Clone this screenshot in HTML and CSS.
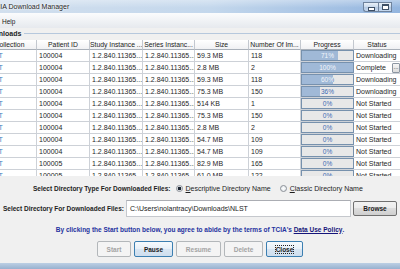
FILE: index.html
```html
<!DOCTYPE html>
<html lang="en">

<head>
    <meta charset="UTF-8">
    <meta name="viewport" content="width=device-width, initial-scale=1.0">
    <title>TCIA Download Manager</title>
    <link rel="stylesheet" href="styles.css">
</head>

<body>
    <div class="window">
        <div class="titlebar">
            <span class="title">TCIA Download Manager</span>
            <div class="caption-buttons">
                <span class="cap-btn"><span class="cap-min"></span></span>
                <span class="cap-btn"><span class="cap-max"></span></span>
            </div>
        </div>
        <div class="menubar"><span class="menu-item">Help</span></div>

        <div class="content">
            <div class="group-title"><span>Downloads</span><span class="group-line"></span></div>

            <div class="table-scroll">
                <table class="downloads">
                    <colgroup>
                        <col class="c-collection">
                        <col class="c-patient">
                        <col class="c-study">
                        <col class="c-series">
                        <col class="c-size">
                        <col class="c-count">
                        <col class="c-progress">
                        <col class="c-status">
                    </colgroup>
                    <thead>
                        <tr>
                            <th>Collection</th>
                            <th>Patient ID</th>
                            <th>Study Instance ...</th>
                            <th>Series Instanc...</th>
                            <th>Size</th>
                            <th>Number Of Im...</th>
                            <th>Progress</th>
                            <th>Status</th>
                        </tr>
                    </thead>
                    <tbody>
                        <tr>
                            <td class="coll">NLST</td><td>100004</td><td>1.2.840.11365...</td><td>1.2.840.11365...</td>
                            <td>59.3 MB</td><td>118</td>
                            <td class="prog"><div class="bar"><span class="bar-label">71%</span><div class="bar-fill" style="width: 71%"><span class="bar-label">71%</span></div></div></td>
                            <td>Downloading</td>
                        </tr>
                        <tr>
                            <td class="coll">NLST</td><td>100004</td><td>1.2.840.11365...</td><td>1.2.840.11365...</td>
                            <td>2.8 MB</td><td>2</td>
                            <td class="prog"><div class="bar"><span class="bar-label">100%</span><div class="bar-fill" style="width: 100%"><span class="bar-label">100%</span></div></div></td>
                            <td><div class="status-cell"><span>Complete</span><span class="more-btn">...</span></div></td>
                        </tr>
                        <tr>
                            <td class="coll">NLST</td><td>100004</td><td>1.2.840.11365...</td><td>1.2.840.11365...</td>
                            <td>59.3 MB</td><td>118</td>
                            <td class="prog"><div class="bar"><span class="bar-label">60%</span><div class="bar-fill" style="width: 60%"><span class="bar-label">60%</span></div></div></td>
                            <td>Downloading</td>
                        </tr>
                        <tr>
                            <td class="coll">NLST</td><td>100004</td><td>1.2.840.11365...</td><td>1.2.840.11365...</td>
                            <td>75.3 MB</td><td>150</td>
                            <td class="prog"><div class="bar"><span class="bar-label">36%</span><div class="bar-fill" style="width: 36%"><span class="bar-label">36%</span></div></div></td>
                            <td>Downloading</td>
                        </tr>
                        <tr>
                            <td class="coll">NLST</td><td>100004</td><td>1.2.840.11365...</td><td>1.2.840.11365...</td>
                            <td>514 KB</td><td>1</td>
                            <td class="prog"><div class="bar"><span class="bar-label">0%</span></div></td>
                            <td>Not Started</td>
                        </tr>
                        <tr>
                            <td class="coll">NLST</td><td>100004</td><td>1.2.840.11365...</td><td>1.2.840.11365...</td>
                            <td>75.3 MB</td><td>150</td>
                            <td class="prog"><div class="bar"><span class="bar-label">0%</span></div></td>
                            <td>Not Started</td>
                        </tr>
                        <tr>
                            <td class="coll">NLST</td><td>100004</td><td>1.2.840.11365...</td><td>1.2.840.11365...</td>
                            <td>2.8 MB</td><td>2</td>
                            <td class="prog"><div class="bar"><span class="bar-label">0%</span></div></td>
                            <td>Not Started</td>
                        </tr>
                        <tr>
                            <td class="coll">NLST</td><td>100004</td><td>1.2.840.11365...</td><td>1.2.840.11365...</td>
                            <td>54.7 MB</td><td>109</td>
                            <td class="prog"><div class="bar"><span class="bar-label">0%</span></div></td>
                            <td>Not Started</td>
                        </tr>
                        <tr>
                            <td class="coll">NLST</td><td>100004</td><td>1.2.840.11365...</td><td>1.2.840.11365...</td>
                            <td>54.7 MB</td><td>109</td>
                            <td class="prog"><div class="bar"><span class="bar-label">0%</span></div></td>
                            <td>Not Started</td>
                        </tr>
                        <tr>
                            <td class="coll">NLST</td><td>100005</td><td>1.2.840.11365...</td><td>1.2.840.11365...</td>
                            <td>82.9 MB</td><td>165</td>
                            <td class="prog"><div class="bar"><span class="bar-label">0%</span></div></td>
                            <td>Not Started</td>
                        </tr>
                        <tr>
                            <td class="coll">NLST</td><td>100005</td><td>1.2.840.11365...</td><td>1.2.840.11365...</td>
                            <td>61.0 MB</td><td>122</td>
                            <td class="prog"><div class="bar"><span class="bar-label">0%</span></div></td>
                            <td>Not Started</td>
                        </tr>
                    </tbody>
                </table>
            </div>

            <div class="options">
                <div class="dir-type">
                    <span class="label">Select Directory Type For Downloaded Files:</span>
                    <span class="radio"><span class="radio-dot checked"></span><u>D</u>escriptive Directory Name</span>
                    <span class="radio radio-second"><span class="radio-dot"></span><u>C</u>lassic Directory Name</span>
                </div>
                <div class="dir-path">
                    <span class="label">Select Directory For Downloaded Files:</span>
                    <div class="path-field">C:\Users\nolantracy\Downloads\NLST</div>
                    <button class="btn btn-browse">Browse</button>
                </div>
                <div class="agree">By clicking the Start button below, you agree to abide by the terms of TCIA's&nbsp;<a class="policy">Data Use Policy</a>.</div>
                <div class="actions">
                    <button class="btn w-start" disabled>Start</button>
                    <button class="btn btn-default w-pause">Pause</button>
                    <button class="btn w-resume" disabled>Resume</button>
                    <button class="btn w-delete" disabled>Delete</button>
                    <button class="btn btn-default w-close"><span class="focus-ring">Close</span></button>
                </div>
            </div>
        </div>
        <div class="frame-bottom"></div>
    </div>
</body>

</html>
```

FILE: styles.css
```css
body {
    margin: 0;
    padding: 0;
    overflow: hidden;
    background: #a9bfd8;
    font-family: "Liberation Sans", Arial, sans-serif;
}

.window {
    width: 421px;
    margin-left: -20px;
    background: #f0f0f0;
}

/* title bar */
.titlebar {
    height: 13px;
    display: flex;
    align-items: flex-start;
    background:
        linear-gradient(to bottom, rgba(255, 255, 255, 0.35), rgba(255, 255, 255, 0) 60%),
        linear-gradient(to right, #d3e0ee, #c3d7ec 55%, #93b5df);
}

.title {
    padding-left: 11px;
    line-height: 13px;
    font-size: 7px;
    color: #1e1e1e;
    text-shadow: 0 0 3px #fff, 0 0 2px #fff;
}

.caption-buttons {
    margin-left: auto;
    margin-right: 9px;
    margin-top: 2px;
    display: flex;
}

.cap-btn {
    width: 15px;
    height: 10px;
    box-sizing: border-box;
    border: 1px solid #6f839d;
    background: linear-gradient(#e8f0f8, #c9d9ec 50%, #b3c9e3 50%, #c6d8ee);
    display: flex;
    align-items: center;
    justify-content: center;
}

.cap-btn:first-child {
    border-radius: 0 0 0 3px;
    border-right: none;
}

.cap-btn:last-child {
    width: 14px;
}

.cap-min {
    width: 5px;
    height: 2px;
    margin-top: 3px;
    background: #fff;
    border: 1px solid #3d4f66;
}

.cap-max {
    width: 5px;
    height: 3px;
    border: 1px solid #3d4f66;
    border-top-width: 2px;
    background: #fff;
}

/* menu */
.menubar {
    height: 15px;
    box-sizing: border-box;
    padding-top: 3px;
    font-size: 6.5px;
    line-height: 12px;
    background: linear-gradient(#fbfcfd, #e6e9ee);
}

.menu-item {
    padding-left: 22px;
    color: #1a1a1a;
}

/* downloads group */
.group-title {
    height: 11px;
    margin-bottom: 1px;
    display: flex;
    align-items: center;
    padding-left: 4px;
    font-size: 7px;
    font-weight: bold;
    color: #1d1d1d;
}

.group-line {
    flex: 1;
    height: 1px;
    margin-left: 3px;
    background: #b6c8dd;
}

.table-scroll {
    height: 136px;
    overflow: hidden;
    margin-left: 3px;
    background: #fff;
}

.downloads {
    border-collapse: separate;
    border-spacing: 0;
    table-layout: fixed;
    width: 418px;
    font-size: 7px;
    color: #262626;
}

.c-collection { width: 54px; }
.c-patient { width: 53px; }
.c-study { width: 53px; }
.c-series { width: 52px; }
.c-size { width: 54px; }
.c-count { width: 52px; }
.c-progress { width: 53px; }
.c-status { width: 47px; }

.downloads thead tr {
    height: 10px;
}

.downloads th {
    padding: 0;
    font-weight: normal;
    font-size: 6.8px;
    color: #222;
    white-space: nowrap;
    overflow: hidden;
    background: linear-gradient(#ffffff, #f0f1f3);
    border-right: 1px solid #c3c8cf;
    border-bottom: 1px solid #a9b0b9;
}

.downloads tbody tr {
    height: 12px;
}

.downloads td {
    padding: 0 0 0 2px;
    white-space: nowrap;
    overflow: hidden;
    border-right: 1px solid #cdd1d7;
    border-bottom: 1px solid #cdd1d7;
}

.downloads td.coll {
    color: #3a7fc0;
}

.downloads td.prog {
    padding: 0;
    border-right: none;
}

.bar {
    position: relative;
    height: 11px;
    box-sizing: border-box;
    border: 1px solid #7791ad;
    background: #e8e8e8;
}

.bar-label {
    display: block;
    text-align: center;
    line-height: 9px;
    font-size: 6.5px;
    color: #3f6ab3;
}

.bar-fill {
    position: absolute;
    left: 0;
    top: 0;
    bottom: 0;
    overflow: hidden;
    background: #a0b9d7;
}

.bar-fill .bar-label {
    width: 51px;
    color: #f3f6fa;
}

.status-cell {
    display: flex;
    align-items: center;
    justify-content: space-between;
}

.more-btn {
    width: 8px;
    height: 10px;
    box-sizing: border-box;
    border: 1px solid #8c96a2;
    border-radius: 1px;
    background: linear-gradient(#f6f6f6, #dcdcdc);
    font-size: 6px;
    line-height: 6px;
    text-align: center;
    color: #222;
}

/* bottom options */
.options {
    height: 87px;
    box-sizing: border-box;
    padding-top: 7px;
    display: flex;
    flex-direction: column;
}

.label {
    font-weight: bold;
    font-size: 6.5px;
    color: #1d1d1d;
    white-space: nowrap;
}

.dir-type {
    height: 10px;
    display: flex;
    align-items: center;
    padding-left: 53px;
    font-size: 7px;
    color: #1d1d1d;
}

.radio {
    display: flex;
    align-items: center;
    margin-left: 5px;
    white-space: nowrap;
}

.radio-second {
    margin-left: 9px;
}

.radio-dot {
    width: 7px;
    height: 7px;
    box-sizing: border-box;
    border-radius: 50%;
    border: 1px solid #8b9097;
    background: radial-gradient(circle, #ffffff 0, #dde2e8 100%);
    margin-right: 3px;
}

.radio-dot.checked {
    background: radial-gradient(circle, #1d2733 0, #1d2733 1.6px, #f2f4f7 2.1px);
}

.dir-path {
    height: 17px;
    margin-top: 7px;
    display: flex;
    align-items: center;
    padding-left: 23px;
    padding-right: 4px;
}

.path-field {
    flex: 1;
    height: 17px;
    box-sizing: border-box;
    margin-left: 2px;
    padding-left: 3px;
    border: 1px solid #c5c8cd;
    border-top-color: #abadb3;
    background: #fff;
    font-size: 7px;
    line-height: 15px;
    color: #1a1a1a;
    white-space: nowrap;
    overflow: hidden;
}

.btn {
    height: 16px;
    box-sizing: border-box;
    padding: 0;
    border: 1px solid #707070;
    border-radius: 2px;
    background: linear-gradient(#f2f2f2, #ebebeb 50%, #dddddd 50%, #cfcfcf);
    font-family: "Liberation Sans", Arial, sans-serif;
    font-weight: bold;
    font-size: 6.5px;
    color: #1c1c1c;
}

.btn-browse {
    width: 44px;
    height: 15px;
    margin-left: 2px;
}

.btn:disabled {
    border-color: #b3b7ba;
    background: #f4f4f4;
    color: #a3a3a3;
}

.btn-default {
    border-color: #3c7fb1;
    background: linear-gradient(#f6fafd, #e7f0f8 50%, #d8e6f3 50%, #cfdeee);
}

.agree {
    height: 14px;
    margin-top: 5px;
    display: flex;
    align-items: center;
    justify-content: center;
    padding-left: 19px;
    font-weight: bold;
    font-size: 6.5px;
    color: #25329f;
    white-space: nowrap;
}

.policy {
    color: #15157a;
    text-decoration: underline;
}

.actions {
    height: 16px;
    margin-top: 5px;
    display: flex;
    justify-content: center;
    gap: 3px;
    padding-left: 19px;
}

.w-start { width: 34px; }
.w-pause { width: 39px; }
.w-resume { width: 45px; }
.w-delete { width: 39px; }
.w-close { width: 37px; }

.focus-ring {
    outline: 1px dotted #222;
    outline-offset: 0;
}

.frame-bottom {
    height: 6px;
    background: linear-gradient(#bccfe4, #98b1cf);
}
```
